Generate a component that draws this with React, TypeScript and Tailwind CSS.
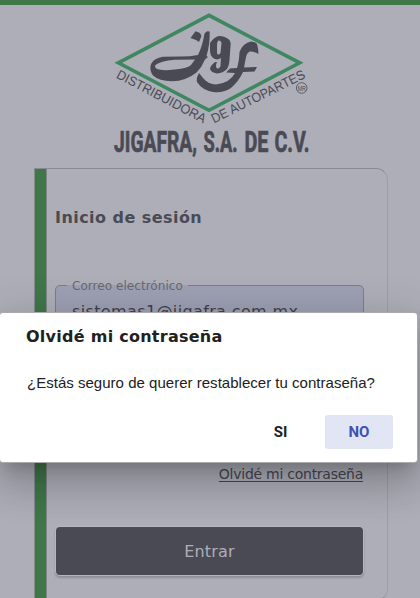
function Logo() {
  return (
    <svg
      viewBox="105 5 210 155"
      className="h-[155px] w-[210px] shrink-0 overflow-visible"
      fill="#4a4a54"
      aria-label="JIGAFRA, S.A. DE C.V."
    >
      <path d="M118.3 62.8 209 15.400 299.700 62.8 209 110.300Z" fill="none" stroke="#3f8760" strokeWidth="3.6" />
      {/* j */}
      <path d="M190.500 38 195.500 31.300 200 33 201.500 36 199 42 196 40Z" />
      <path
        fillRule="evenodd"
        d="M204.500 33.500 207 31.300 209.700 31.500Q210 45 206.500 56L208 57 205 59.500Q202 67 196.500 72.500 186 81 172 81.300 159 81 153 75.500 149 70 151 64 154 58 163 56.800L181 56.500Q190 56.500 198 55 202.500 46 204.500 33.500ZM195 59.500 175 59.800Q160 61 155.500 65 154 67 157 69 162 71 175 69.500 188 68 191 65Z"
      />
      {/* g */}
      <path
        fillRule="evenodd"
        d="M210 43Q214 37 219 36 225 36 229.500 40 231 42 230.500 46L229.500 60Q229 66 227 69 223 73 217 73.500 211 72.500 210 69 210 66 215 62L217 62Q215 66 217 68.500 219.500 69 220.500 66L221 58Q217 61 212.500 57.500 210 55 210 51ZM218.300 40.500Q217 42 217 46L217 53Q218 56 220.500 53L221.500 43Q221 40 218.300 40.500Z"
      />
      {/* f and its long tail */}
      <path d="M258.500 54Q253 51 249.500 51.500 247 53 246 57L244 67.500 257 67 254.500 71.500 243 72Q239 81 231 88 222 93.500 213 92 202 90 197 82 196 78 199 73L203 78Q208 84 216 84.500 230 83 235 73L226 72.500 230 68.500 237 68Q239 62 239.500 52 243 43 251 41.500 255 41.500 257 44Q258.500 49 258.500 54Z" />
      <g fontFamily="'Liberation Sans', Arial, sans-serif" fontSize="13.3">
        <text transform="translate(115.500 77.500) rotate(27.600)" textLength="99" lengthAdjust="spacingAndGlyphs">
          DISTRIBUIDORA
        </text>
        <text transform="translate(214 123.500) rotate(-26.500)" textLength="103" lengthAdjust="spacingAndGlyphs">
          DE AUTOPARTES
        </text>
        <circle cx="301.700" cy="88" r="5.300" fill="none" stroke="#4a4a54" strokeWidth=".8" />
        <text x="297.700" y="90.500" fontSize="6.500" textLength="8" lengthAdjust="spacingAndGlyphs">
          MR
        </text>
      </g>
      <text
        y="152.200"
        fontFamily="Roboto, 'Liberation Sans', sans-serif"
        fontWeight="700"
        fontSize="29"
        stroke="#4a4a54"
        strokeWidth=".7"
      >
        <tspan x="114" textLength="83" lengthAdjust="spacingAndGlyphs">JIGAFRA,</tspan>
        <tspan x="203.500" textLength="34" lengthAdjust="spacingAndGlyphs">S.A.</tspan>
        <tspan x="244.500" textLength="24" lengthAdjust="spacingAndGlyphs">DE</tspan>
        <tspan x="274.500" textLength="35" lengthAdjust="spacingAndGlyphs">C.V.</tspan>
      </text>
    </svg>
  );
}

function LoginCard() {
  return (
    <main className="ml-[34px] mt-2 flex h-[433px] w-[354px] rounded-r-xl border border-[#898992] border-r-[#9d9da6]">
      <div className="w-3 shrink-0 border-r border-[#85858e] bg-[#3f7748]" />
      <div className="flex flex-1 flex-col pl-2 pr-6">
        <h1 className="mt-[37px] text-[16px] font-bold leading-6 tracking-[0.45px] text-[#4a4a54]">Inicio de sesión</h1>
        <fieldset className="-mr-px mt-[48px] h-[63px] rounded-[5px] border border-[#7e7e8b] bg-[#9da0b3] pl-4">
          <legend className="-ml-[5px] h-[14px] px-[5px] pt-px text-[12px] leading-[14px] tracking-[0.05px] text-[#686872]">
            Correo electrónico
          </legend>
          <div className="mt-2 text-[16px] leading-6 tracking-[0.37px] text-[#41414b]">sistemas1@jigafra.com.mx</div>
        </fieldset>
        <a className="mt-[123px] self-end text-[14px] leading-5 tracking-[-0.26px] text-[#474751] underline underline-offset-2">
          Olvidé mi contraseña
        </a>
        <button className="ml-px mt-[43px] flex h-[48px] w-[307px] shrink-0 items-center justify-center rounded-[4px] bg-[#4a4a54] pt-0.5 text-[16px] tracking-[0.2px] text-[#aeaeb8] shadow-[0_0_0_1px_#b6b6bd,0_2px_2px_1px_#8e8e97]">
          Entrar
        </button>
      </div>
    </main>
  );
}

function Dialog() {
  return (
    <div
      role="dialog"
      className="absolute left-0 top-[313px] flex h-[149px] w-[417px] flex-col rounded-[3px] bg-white shadow-[0_0_0_1px_#aaaaad,0_11px_15px_-7px_rgba(0,0,0,0.2),0_24px_38px_3px_rgba(0,0,0,0.14),0_9px_46px_8px_rgba(0,0,0,0.12)]"
    >
      <h2 className="ml-[26px] mt-3 text-[16px] font-bold leading-6 tracking-[0.26px] text-[#212121]">
        Olvidé mi contraseña
      </h2>
      <p className="ml-[27px] mt-6 font-['Liberation_Sans',Arial,sans-serif] text-[15px] leading-5 tracking-[0.02px] text-[#212121]">
        ¿Estás seguro de querer restablecer tu contraseña?
      </p>
      <div className="mr-6 mt-[22px] flex justify-end font-['Roboto','Liberation_Sans',sans-serif] text-[15px] font-bold">
        <button className="h-[34px] w-[89px] text-[#212121]">SI</button>
        <button className="h-[34px] w-[68px] rounded-[3px] bg-[#e2e5f3] text-[#3f51b5]">NO</button>
      </div>
    </div>
  );
}

export default function App() {
  return (
    <div className="relative h-[598px] w-[420px] overflow-hidden bg-[#aeaeb8] font-['DejaVu_Sans',Verdana,sans-serif]">
      <div className="h-[5px] bg-[#3f7748]" />
      <div className="ml-[105px] flex">
        <Logo />
      </div>
      <LoginCard />
      <Dialog />
    </div>
  );
}
